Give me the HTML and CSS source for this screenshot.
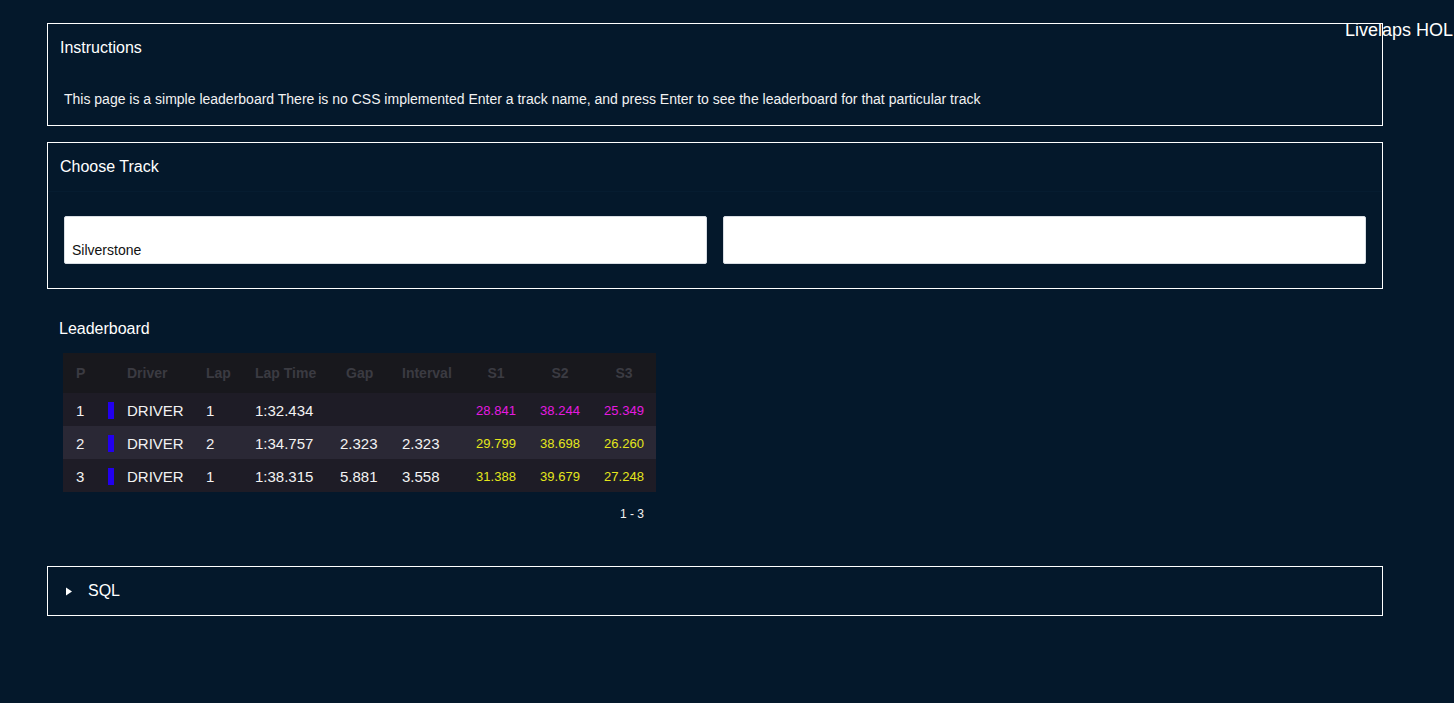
FILE: index.html
```html
<!DOCTYPE html>
<html>
<head>
<meta charset="utf-8">
<link rel="stylesheet" href="styles.css">
</head>
<body>
<div class="brand">Livelaps HOL</div>
<main class="page">
  <section class="panel instructions">
    <h2 class="panel-title">Instructions</h2>
    <p class="instr-text">This page is a simple leaderboard There is no CSS implemented Enter a track name, and press Enter to see the leaderboard for that particular track</p>
  </section>

  <section class="panel track">
    <h2 class="panel-title track-title">Choose Track</h2>
    <div class="inputs">
      <div class="field"><span class="field-value">Silverstone</span></div>
      <div class="field"></div>
    </div>
  </section>

  <section class="leaderboard">
    <h2 class="lb-title">Leaderboard</h2>
    <table class="lb-table">
      <thead>
        <tr>
          <th class="c-p">P</th>
          <th class="c-bar"></th>
          <th class="c-driver">Driver</th>
          <th class="c-lap">Lap</th>
          <th class="c-time">Lap Time</th>
          <th class="c-gap">Gap</th>
          <th class="c-int">Interval</th>
          <th class="c-s">S1</th>
          <th class="c-s">S2</th>
          <th class="c-s">S3</th>
        </tr>
      </thead>
      <tbody>
        <tr>
          <td class="c-p">1</td><td class="c-bar"><span class="bar"></span></td><td class="c-driver">DRIVER</td><td class="c-lap">1</td><td class="c-time">1:32.434</td><td class="c-gap"></td><td class="c-int"></td>
          <td class="c-s best">28.841</td><td class="c-s best">38.244</td><td class="c-s best">25.349</td>
        </tr>
        <tr class="alt">
          <td class="c-p">2</td><td class="c-bar"><span class="bar"></span></td><td class="c-driver">DRIVER</td><td class="c-lap">2</td><td class="c-time">1:34.757</td><td class="c-gap">2.323</td><td class="c-int">2.323</td>
          <td class="c-s slow">29.799</td><td class="c-s slow">38.698</td><td class="c-s slow">26.260</td>
        </tr>
        <tr>
          <td class="c-p">3</td><td class="c-bar"><span class="bar"></span></td><td class="c-driver">DRIVER</td><td class="c-lap">1</td><td class="c-time">1:38.315</td><td class="c-gap">5.881</td><td class="c-int">3.558</td>
          <td class="c-s slow">31.388</td><td class="c-s slow">39.679</td><td class="c-s slow">27.248</td>
        </tr>
      </tbody>
    </table>
    <div class="pager">1 - 3</div>
  </section>

  <section class="panel sql">
    <span class="toggle"><svg width="9" height="9" viewBox="0 0 9 9"><path d="M2 0.5 L8 4.5 L2 8.5 Z" fill="#ffffff"/></svg></span>
    <span class="sql-label">SQL</span>
  </section>
</main>
</body>
</html>
```

FILE: styles.css
```css
html, body {
  margin: 0;
  padding: 0;
}
body {
  background: #04182b;
  color: #ffffff;
  font-family: "Liberation Sans", Arial, sans-serif;
  width: 1454px;
  height: 703px;
  overflow: hidden;
  position: relative;
}
.brand {
  position: absolute;
  left: 1345px;
  top: 20px;
  font-size: 18px;
  white-space: nowrap;
  color: #ffffff;
}
.page {
  display: flex;
  flex-direction: column;
  padding: 23px 0 0 47px;
  width: 1336px;
}
.panel {
  border: 1px solid #ffffff;
  box-sizing: border-box;
}
.panel-title {
  margin: 0;
  font-size: 16px;
  font-weight: normal;
  line-height: 20px;
}
.instructions {
  height: 103px;
  padding: 14px 12px 0 12px;
}
.instr-text {
  margin: 32px 0 0 4px;
  font-size: 14px;
  line-height: 18px;
  color: #f2f2f2;
}
.track {
  margin-top: 16px;
  height: 147px;
}
.track-title {
  padding: 14px 12px 14px 12px;
  border-bottom: 1px solid #061c30;
}
.inputs {
  display: flex;
  gap: 16px;
  padding: 24px 16px 0 16px;
}
.field {
  flex: 1;
  height: 48px;
  background: #ffffff;
  border-radius: 2px;
  border: 1px solid #d8dde3;
  box-sizing: border-box;
  display: flex;
  align-items: flex-end;
  padding: 0 8px 5px 7px;
}
.field-value {
  color: #111111;
  font-size: 14px;
  line-height: 16px;
}
.leaderboard {
  padding: 30px 0 0 12px;
  height: 247px;
}
.lb-title {
  margin: 0;
  font-size: 16px;
  font-weight: normal;
  line-height: 20px;
}
.lb-table {
  margin: 14px 0 0 4px;
  border-collapse: collapse;
  table-layout: fixed;
  width: 593px;
}
.lb-table th {
  background: #18181d;
  color: #3b3b42;
  font-size: 14px;
  font-weight: bold;
  height: 40px;
  padding: 0;
  text-align: left;
}
.lb-table td {
  background: #1e1c26;
  font-size: 15px;
  height: 33px;
  padding: 1px 0 0 0;
  box-sizing: border-box;
  text-align: left;
  color: #f2f2f2;
}
.lb-table tr.alt td {
  background: #2a2835;
}
.lb-table .c-p { width: 32px; padding-left: 13px; }
.c-bar { width: 19px; }
.c-driver { width: 79px; }
.c-lap { width: 49px; }
.c-time { width: 85px; }
.c-gap { width: 62px; }
.lb-table th.c-gap { padding-left: 6px; width: 56px; }
.c-int { width: 62px; }
.lb-table th.c-s, .lb-table td.c-s { text-align: center; width: 64px; }
.lb-table td.c-s { font-size: 13px; }
.lb-table td.best { color: #e51ae0; }
.lb-table td.slow { color: #e4e61c; }
.bar {
  display: block;
  width: 6px;
  height: 17px;
  background: #2200ee;
}
.pager {
  width: 597px;
  text-align: right;
  font-size: 12px;
  margin-top: 15px;
  padding-right: 12px;
  box-sizing: border-box;
  color: #f2f2f2;
}
.sql {
  height: 50px;
  display: flex;
  align-items: center;
  padding-left: 16px;
}
.toggle {
  display: flex;
  width: 9px;
  height: 9px;
  margin-right: 15px;
}
.sql-label {
  font-size: 16px;
}
```
